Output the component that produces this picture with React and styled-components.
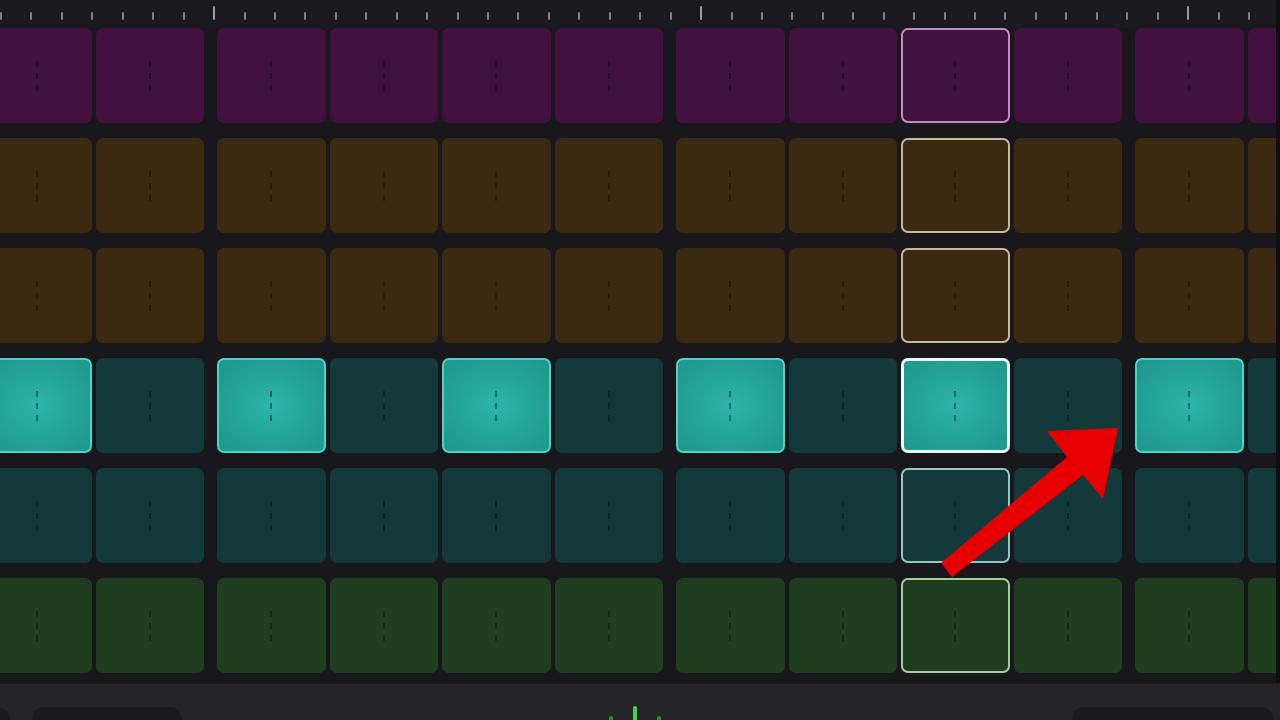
import React from "react";
import styled, { createGlobalStyle, css } from "styled-components";

const GlobalStyle = createGlobalStyle`
  html, body { margin: 0; padding: 0; background: #18171c; }
  body { font-family: "Inter", "Liberation Sans", sans-serif; overflow: hidden; }
`;

const Screen = styled.div`
  position: relative;
  width: 1280px;
  height: 720px;
  overflow: hidden;
  background: #18171c;
  display: flex;
  flex-direction: column;
`;

const Upper = styled.div`
  display: flex;
  height: 683px;
`;

const Stage = styled.div`
  width: 1276px;
  height: 683px;
  overflow: hidden;
  display: flex;
  flex-direction: column;
  background: #18171c;
`;

const EdgeStrip = styled.div`
  width: 4px;
  background: #0f0f12;
`;

const Ruler = styled.div`
  height: 28px;
  flex: none;
  display: flex;
  align-items: flex-end;
  padding-bottom: 8px;
  box-sizing: border-box;
  background: #1a1a1e;
`;

const TickSlot = styled.div`
  flex: none;
  width: 30.44px;
  height: 14px;
  display: flex;
  align-items: flex-end;
`;

const Tick = styled.div`
  width: 2px;
  border-radius: 1px;
  background: ${(p) => (p.$major ? "#9c9ca0" : "#7f7f84")};
  height: ${(p) => (p.$major ? "14px" : "8px")};
`;

const Grid = styled.div`
  display: flex;
  flex-direction: column;
  gap: 15px;
  margin-left: -242px;
`;

const Row = styled.div`
  display: flex;
  gap: 13px;
  height: 95px;
`;

const Group = styled.div`
  display: flex;
  gap: 4px;
  flex: none;
`;

const palette = {
  purple: { bg: "#43113f", dash: "#2c0a2a", ring: "#c18cbe" },
  brown: { bg: "#3b2912", dash: "#281b0a", ring: "#c8b89a" },
  teal: { bg: "#13393a", dash: "#0c2627", ring: "#93c9c2" },
  green: { bg: "#1f3e1f", dash: "#132913", ring: "#a9c9a1" },
};

const Pad = styled.div`
  position: relative;
  flex: none;
  width: 108.5px;
  height: 95px;
  box-sizing: border-box;
  border-radius: 7px;
  background: ${(p) => palette[p.$tone].bg};
  border: 2px solid ${(p) => palette[p.$tone].bg};
  ${(p) =>
    p.$ring &&
    css`
      border-color: ${palette[p.$tone].ring};
    `}
  ${(p) =>
    p.$on &&
    css`
      background: radial-gradient(ellipse at center, #2db5a9 0%, #25a69a 45%, #1f968c 100%);
      border-color: #4fd3c6;
    `}
  ${(p) =>
    p.$on &&
    p.$ring &&
    css`
      border: 3px solid #e8fbf8;
    `}
  &::after {
    content: "";
    position: absolute;
    left: 50%;
    top: 50%;
    width: 2px;
    height: 30px;
    margin-left: -1px;
    margin-top: -15px;
    background: repeating-linear-gradient(
      to bottom,
      ${(p) => (p.$on ? "#0f6a66" : palette[p.$tone].dash)} 0px,
      ${(p) => (p.$on ? "#0f6a66" : palette[p.$tone].dash)} 6px,
      transparent 6px,
      transparent 12px
    );
  }
`;

const BottomBar = styled.div`
  flex: 1;
  background: #242429;
  border-top: 1px solid #1c1b20;
  display: flex;
  align-items: flex-end;
  padding: 0 7px 0 0;
  position: relative;
`;

const EdgeKnob = styled.div`
  flex: none;
  width: 10px;
  height: 12px;
  margin-right: 22px;
  border-radius: 0 10px 0 0;
  background: #1b1a1f;
`;

const Slot = styled.div`
  height: 13px;
  border-radius: 12px 12px 0 0;
  background: #1b1a1f;
  width: ${(p) => p.$w}px;
  flex: none;
`;

const Spacer = styled.div`
  flex: 1;
  display: flex;
  justify-content: center;
  align-items: flex-end;
  height: 100%;
`;

const Meter = styled.div`
  display: flex;
  align-items: flex-end;
  gap: 20px;
  margin-left: 16px;
`;

const MeterBar = styled.div`
  width: 4px;
  border-radius: 2px 2px 0 0;
  background: ${(p) => (p.$main ? "#3fd74c" : "#2e8f37")};
  height: ${(p) => p.$h}px;
`;

const ArrowLayer = styled.svg`
  position: absolute;
  left: 0;
  top: 0;
  pointer-events: none;
`;

const rows = [
  { tone: "purple", on: [] },
  { tone: "brown", on: [] },
  { tone: "brown", on: [] },
  { tone: "teal", on: [2, 4, 6, 8, 10, 12, 14] },
  { tone: "teal", on: [] },
  { tone: "green", on: [] },
];

const HIGHLIGHT = 10;
const GROUPS = 4;

export default function App() {
  const ticks = Array.from({ length: 42 }, (_, i) => i);
  return (
    <>
      <GlobalStyle />
      <Screen>
        <Upper>
          <Stage>
            <Ruler>
              {ticks.map((i) => (
                <TickSlot key={i}>
                  <Tick $major={(i - 7) % 16 === 0} />
                </TickSlot>
              ))}
            </Ruler>
            <Grid>
              {rows.map((r, ri) => (
                <Row key={ri}>
                  {Array.from({ length: GROUPS }, (_, g) => (
                    <Group key={g}>
                      {[0, 1, 2, 3].map((k) => {
                        const c = g * 4 + k;
                        return (
                          <Pad
                            key={k}
                            $tone={r.tone}
                            $on={r.on.includes(c)}
                            $ring={c === HIGHLIGHT}
                          />
                        );
                      })}
                    </Group>
                  ))}
                </Row>
              ))}
            </Grid>
          </Stage>
          <EdgeStrip />
        </Upper>
        <BottomBar>
          <EdgeKnob />
          <Slot $w={150} />
          <Spacer>
            <Meter>
              <MeterBar $h={4} />
              <MeterBar $h={14} $main />
              <MeterBar $h={4} />
            </Meter>
          </Spacer>
          <Slot $w={201} />
        </BottomBar>
        <ArrowLayer width="1280" height="720" viewBox="0 0 1280 720">
          <polygon
            points="941,563 1067,457 1047,431 1118,428 1103,499 1083,475 952,577"
            fill="#e60000"
          />
        </ArrowLayer>
      </Screen>
    </>
  );
}
